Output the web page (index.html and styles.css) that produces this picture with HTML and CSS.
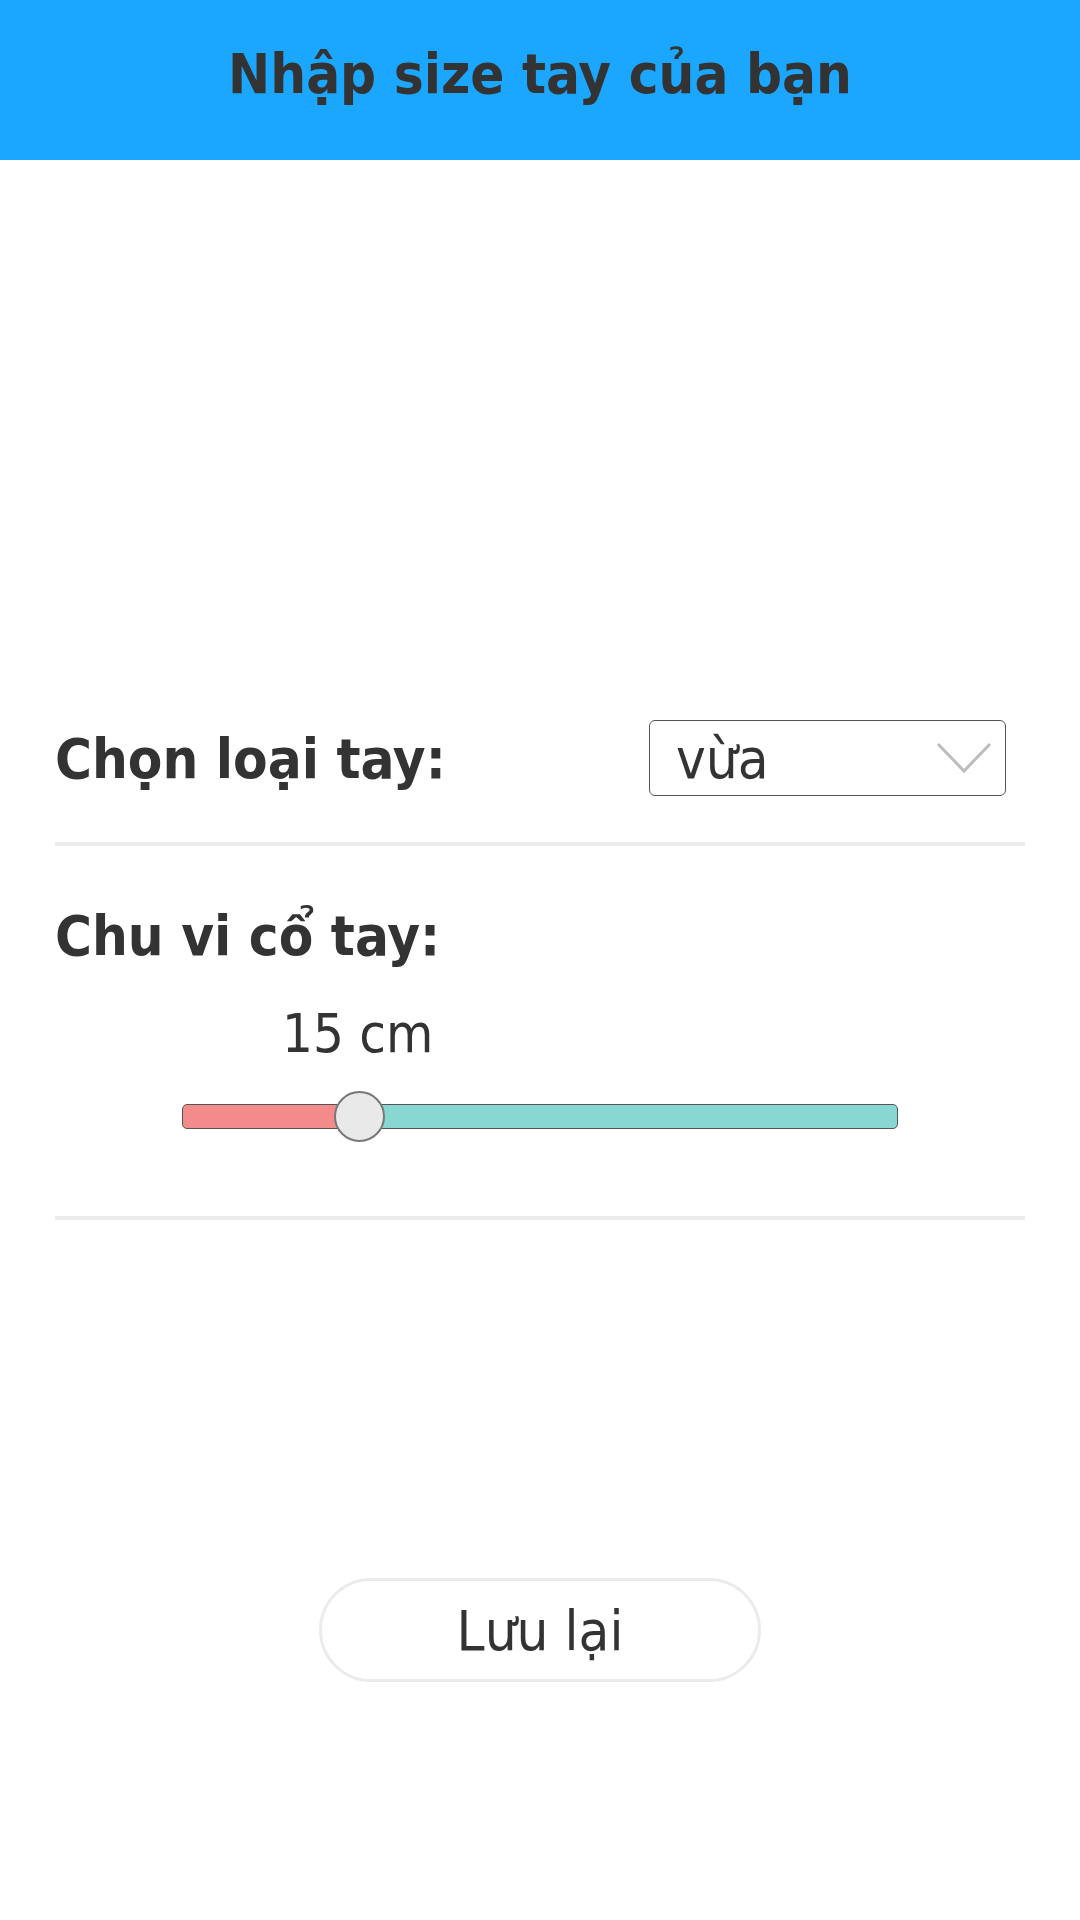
FILE: index.html
```html
<!DOCTYPE html>
<html lang="vi">
<head>
    <meta charset="UTF-8">
    <meta name="viewport" content="width=device-width, initial-scale=1.0">
    <title>Nhập size tay của bạn</title>
    <link rel="stylesheet" href="styles.css">
</head>
<body>
    <header class="top-bar">
        <h1>Nhập size tay của bạn</h1>
    </header>

    <div class="container">
        <div class="row row-select">
            <label for="hand-type">Chọn loại tay:</label>
            <div class="select-box">
                <select id="hand-type">
                    <option>nhỏ</option>
                    <option selected>vừa</option>
                    <option>to</option>
                </select>
                <svg class="chevron" width="56" height="32" viewBox="0 0 56 32">
                    <polyline points="2,2 28,29 54,2" fill="none" stroke="#bdbdbd" stroke-width="3"/>
                </svg>
            </div>
        </div>

        <div class="row row-slider">
            <label for="wrist">Chu vi cổ tay:</label>
            <div class="slider-value"><span>15 cm</span></div>
            <div class="slider-wrap">
                <input type="range" id="wrist" class="slider" min="10" max="32" value="15"
                       style="background: linear-gradient(to right, #f48b8b 0%, #f48b8b 24.4%, #89d7d3 24.4%, #89d7d3 100%);">
            </div>
        </div>

        <div class="actions">
            <button class="save-btn">Lưu lại</button>
        </div>
    </div>
</body>
</html>
```

FILE: styles.css
```css
body {
    margin: 0;
    font-family: "DejaVu Sans Condensed", "DejaVu Sans", sans-serif;
    color: #333;
    background-color: #fff;
}

.top-bar {
    height: 160px;
    box-sizing: border-box;
    padding-bottom: 14px;
    background-color: #1ba7ff;
    display: flex;
    align-items: center;
    justify-content: center;
}

.top-bar h1 {
    margin: 0;
    font-size: 56px;
    font-weight: bold;
    color: #333;
}

.container {
    padding: 0 55px;
}

.row {
    border-bottom: 4px solid #ebebeb;
}

.row label {
    font-size: 56px;
    font-weight: bold;
}

.row-select {
    margin-top: 560px;
    padding: 0 19px 46px 0;
    display: flex;
    align-items: center;
    justify-content: space-between;
}

.select-box {
    position: relative;
    width: 357px;
    height: 76px;
}

.select-box select {
    appearance: none;
    -webkit-appearance: none;
    width: 100%;
    height: 100%;
    border: 1px solid #555;
    border-radius: 6px;
    background: #fff;
    padding: 0 0 0 26px;
    font-family: inherit;
    font-size: 56px;
    color: #333;
}

.chevron {
    position: absolute;
    right: 14px;
    top: 22px;
    pointer-events: none;
}

.row-slider {
    padding-top: 57px;
    padding-bottom: 74px;
    display: flex;
    flex-direction: column;
}

.slider-value {
    margin-top: 34px;
    padding-left: 227px;
    font-size: 54px;
}

.slider-wrap {
    margin-top: 25px;
    padding-left: 127px;
    height: 52px;
    display: flex;
    align-items: center;
}

.slider {
    -webkit-appearance: none;
    appearance: none;
    margin: 0;
    width: 716px;
    height: 25px;
    border: 1px solid #555;
    border-radius: 5px;
    box-sizing: border-box;
    outline: none;
}

.slider::-webkit-slider-thumb {
    -webkit-appearance: none;
    appearance: none;
    width: 51px;
    height: 51px;
    border-radius: 50%;
    border: 2px solid #777;
    background-color: #e9e9e9;
    box-sizing: border-box;
}

.actions {
    display: flex;
    justify-content: center;
    margin-top: 358px;
}

.save-btn {
    width: 442px;
    height: 104px;
    border: 3px solid #ebebeb;
    border-radius: 52px;
    background-color: #fff;
    font-family: inherit;
    font-size: 56px;
    color: #333;
    cursor: pointer;
}
```
